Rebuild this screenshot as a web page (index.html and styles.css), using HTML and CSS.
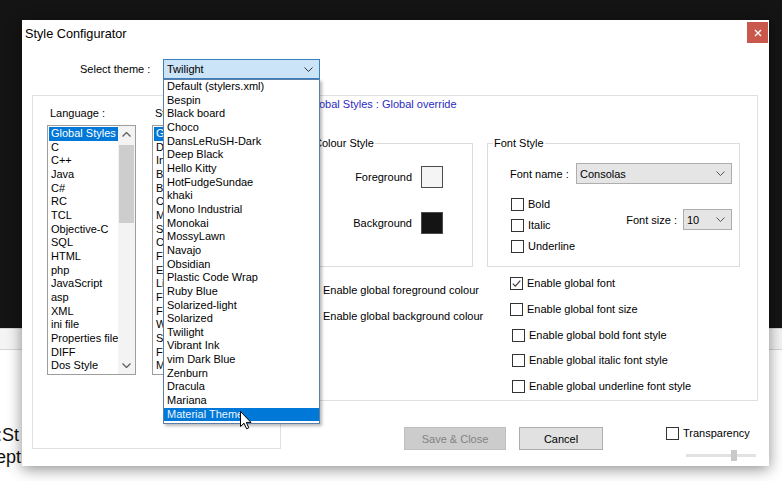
FILE: index.html
```html
<!DOCTYPE html>
<html lang="en">
<head>
<meta charset="utf-8">
<title>Style Configurator</title>
<link rel="stylesheet" href="styles.css">
</head>
<body>
<div class="desktop">
  <div class="bg-dark"></div>
  <div class="bg-bar"></div>
  <div class="bg-doc">
    <div class="doc-line">:St</div>
    <div class="doc-line doc-line-2">eption</div>
  </div>
</div>

<div class="dialog">
  <div class="titlebar">
    <span class="title">Style Configurator</span>
    <div class="close"><svg width="8" height="8" viewBox="0 0 8 8"><path d="M1 1L7 7M7 1L1 7" stroke="#fff" stroke-width="1.4"/></svg></div>
  </div>

  <div class="theme-row">
    <span class="theme-label">Select theme :</span>
    <div class="combo combo-theme"><span>Twilight</span><svg class="chev" width="9" height="5" viewBox="0 0 9 5"><path d="M0.5 0.5L4.5 4.5L8.5 0.5" fill="none" stroke="#333"/></svg></div>
  </div>

  <div class="main">
    <div class="panel-left">
      <div class="list-col">
        <div class="list-label">Language :</div>
        <div class="listbox lang-list">
          <div class="items">
            <div class="item sel">Global Styles</div>
            <div class="item">C</div>
            <div class="item">C++</div>
            <div class="item">Java</div>
            <div class="item">C#</div>
            <div class="item">RC</div>
            <div class="item">TCL</div>
            <div class="item">Objective-C</div>
            <div class="item">SQL</div>
            <div class="item">HTML</div>
            <div class="item">php</div>
            <div class="item">JavaScript</div>
            <div class="item">asp</div>
            <div class="item">XML</div>
            <div class="item">ini file</div>
            <div class="item">Properties file</div>
            <div class="item">DIFF</div>
            <div class="item">Dos Style</div>
          </div>
          <div class="vscroll">
            <div class="sb-btn"><svg width="9" height="5" viewBox="0 0 9 5"><path d="M0.5 4.5L4.5 0.5L8.5 4.5" fill="none" stroke="#606060" stroke-width="1.3"/></svg></div>
            <div class="sb-track"><div class="sb-thumb"></div></div>
            <div class="sb-btn"><svg width="9" height="5" viewBox="0 0 9 5"><path d="M0.5 0.5L4.5 4.5L8.5 0.5" fill="none" stroke="#606060" stroke-width="1.3"/></svg></div>
          </div>
        </div>
      </div>
      <div class="list-col style-col">
        <div class="list-label">Style :</div>
        <div class="listbox style-list">
          <div class="items">
            <div class="item sel">Global override</div>
            <div class="item">Default Style</div>
            <div class="item">Indent guideline style</div>
            <div class="item">Brace highlight style</div>
            <div class="item">Bad brace colour</div>
            <div class="item">Current line background colour</div>
            <div class="item">Mark colour</div>
            <div class="item">Selected text colour</div>
            <div class="item">Caret colour</div>
            <div class="item">Find Mark Style</div>
            <div class="item">Edge colour</div>
            <div class="item">Line number margin</div>
            <div class="item">Fold</div>
            <div class="item">Fold margin</div>
            <div class="item">White space symbol</div>
            <div class="item">Smart HighLighting</div>
            <div class="item">Find status</div>
            <div class="item">Mark Style 1</div>
          </div>
        </div>
      </div>
    </div>

    <div class="right-col">
      <div class="panel-right">
        <div class="header">Global Styles : Global override</div>
        <div class="groups">
          <div class="group group-colour">
            <span class="legend">Colour Style</span>
            <div class="colour-grid">
              <span class="clabel">Foreground</span><span class="swatch swatch-fg"></span>
              <span class="clabel">Background</span><span class="swatch swatch-bg"></span>
            </div>
          </div>
          <div class="group group-font">
            <span class="legend">Font Style</span>
            <div class="font-row">
              <span class="fn-label">Font name :</span>
              <div class="combo combo-font"><span>Consolas</span><svg class="chev" width="9" height="5" viewBox="0 0 9 5"><path d="M0.5 0.5L4.5 4.5L8.5 0.5" fill="none" stroke="#555"/></svg></div>
            </div>
            <div class="font-lower">
              <div class="style-checks">
                <div class="check"><span class="cb"></span>Bold</div>
                <div class="check"><span class="cb"></span>Italic</div>
                <div class="check"><span class="cb"></span>Underline</div>
              </div>
              <div class="size-row">
                <span class="fs-label">Font size :</span>
                <div class="combo combo-size"><span>10</span><svg class="chev" width="9" height="5" viewBox="0 0 9 5"><path d="M0.5 0.5L4.5 4.5L8.5 0.5" fill="none" stroke="#555"/></svg></div>
              </div>
            </div>
          </div>
        </div>
        <div class="enables">
          <div class="enables-left">
            <div class="check"><span class="cb"></span>Enable global foreground colour</div>
            <div class="check"><span class="cb"></span>Enable global background colour</div>
          </div>
          <div class="enables-right">
            <div class="check"><span class="cb"><svg width="11" height="11" viewBox="0 0 11 11"><path d="M1.8 5.6L4.3 8.1L9.3 2.6" fill="none" stroke="#333" stroke-width="1.1"/></svg></span>Enable global font</div>
            <div class="check"><span class="cb"></span>Enable global font size</div>
            <div class="check shift"><span class="cb"></span>Enable global bold font style</div>
            <div class="check shift"><span class="cb"></span>Enable global italic font style</div>
            <div class="check shift"><span class="cb"></span>Enable global underline font style</div>
          </div>
        </div>
      </div>

      <div class="footer">
        <button class="btn btn-save" disabled>Save &amp; Close</button>
        <button class="btn btn-cancel">Cancel</button>
        <div class="transp">
          <div class="check"><span class="cb"></span>Transparency</div>
          <div class="slider"><span class="thumb"></span></div>
        </div>
      </div>
    </div>
  </div>

  <div class="dropdown">
    <div class="ditem">Default (stylers.xml)</div>
    <div class="ditem">Bespin</div>
    <div class="ditem">Black board</div>
    <div class="ditem">Choco</div>
    <div class="ditem">DansLeRuSH-Dark</div>
    <div class="ditem">Deep Black</div>
    <div class="ditem">Hello Kitty</div>
    <div class="ditem">HotFudgeSundae</div>
    <div class="ditem">khaki</div>
    <div class="ditem">Mono Industrial</div>
    <div class="ditem">Monokai</div>
    <div class="ditem">MossyLawn</div>
    <div class="ditem">Navajo</div>
    <div class="ditem">Obsidian</div>
    <div class="ditem">Plastic Code Wrap</div>
    <div class="ditem">Ruby Blue</div>
    <div class="ditem">Solarized-light</div>
    <div class="ditem">Solarized</div>
    <div class="ditem">Twilight</div>
    <div class="ditem">Vibrant Ink</div>
    <div class="ditem">vim Dark Blue</div>
    <div class="ditem">Zenburn</div>
    <div class="ditem">Dracula</div>
    <div class="ditem">Mariana</div>
    <div class="ditem dsel">Material Theme</div>
  </div>
</div>

<svg class="cursor" width="13" height="19" viewBox="0 0 13 19"><path d="M0.5 0.5L0.5 15.5L4 12.2L6.6 17.8L8.8 16.8L6.3 11.4L11 11.4Z" fill="#fff" stroke="#000" stroke-width="1" stroke-linejoin="round"/></svg>
</body>
</html>
```

FILE: styles.css
```css
* { box-sizing: border-box; }
html, body { margin: 0; padding: 0; }
body {
  width: 782px;
  height: 481px;
  overflow: hidden;
  position: relative;
  background: #fff;
  font-family: "Liberation Sans", Arial, sans-serif;
  font-size: 11px;
  line-height: 14px;
  color: #000;
}

/* background desktop */
.desktop { display: flex; flex-direction: column; height: 481px; }
.bg-dark { flex: none; height: 328px; background: #141414; }
.bg-bar {
  flex: none;
  height: 22px;
  background: #f4f4f4;
  border-top: 1px solid #d6d6d6;
  border-bottom: 1px solid #d6d6d6;
}
.bg-doc {
  flex: 1;
  background: #fff;
  padding-top: 74px;
  font-size: 18px;
  line-height: 22px;
  color: #111;
}
.doc-line { white-space: nowrap; margin-left: -3px; }
.doc-line-2 { margin-left: -4px; }

/* dialog */
.dialog {
  position: absolute;
  left: 22px;
  top: 20px;
  width: 747px;
  height: 446px;
  background: #fff;
  box-shadow: 0 3px 14px rgba(0, 0, 0, 0.45);
  display: flex;
  flex-direction: column;
}
.titlebar { flex: none; height: 30px; display: flex; align-items: flex-start; }
.title { margin: 6px 0 0 3px; font-size: 12.7px; line-height: 16px; }
.close {
  margin: 2px 1px 0 auto;
  width: 21px;
  height: 21px;
  background: #c9574b;
  display: flex;
  align-items: center;
  justify-content: center;
}

.theme-row {
  flex: none;
  display: flex;
  align-items: center;
  height: 20px;
  margin-top: 9px;
  padding-left: 58px;
}
.theme-label { flex: none; width: 83px; }

.combo {
  display: flex;
  align-items: center;
  justify-content: space-between;
  border: 1px solid #adadad;
  background: #e5e5e5;
  padding: 0 6px 0 3px;
  flex: none;
}
.combo-theme { width: 157px; height: 20px; border-color: #3c7fc0; background: #cce4f7; }
.combo-font { width: 156px; height: 21px; }
.combo-size { width: 49px; height: 21px; }

.main { flex: 1; display: flex; align-items: flex-start; margin-top: 16px; }

/* left panel */
.panel-left {
  flex: none;
  margin-left: 10px;
  width: 249px;
  height: 354px;
  border: 1px solid #e0e0e0;
  display: flex;
  align-items: flex-start;
  padding: 10px 0 0 14px;
}
.list-col { display: flex; flex-direction: column; }
.style-col { margin-left: 16px; }
.list-label { padding-left: 3px; height: 14px; margin-bottom: 5px; white-space: nowrap; }
.listbox { display: flex; border: 1px solid #9d9d9d; background: #fff; height: 250px; }
.lang-list { width: 89px; }
.style-list { width: 112px; }
.items { flex: 1; min-width: 0; padding: 1px 0 0 1px; overflow: hidden; }
.item { height: 13.667px; line-height: 13.667px; padding-left: 2px; white-space: nowrap; }
.item.sel { background: #0078d7; color: #fff; }
.vscroll { flex: none; width: 17px; background: #f3f3f3; display: flex; flex-direction: column; }
.sb-btn { flex: none; height: 17px; display: flex; align-items: center; justify-content: center; }
.sb-track { flex: 1; padding: 2px 1px 0 1px; }
.sb-thumb { height: 78px; background: #cdcdcd; }

/* right panel */
.right-col { flex: none; margin-left: -1px; width: 478px; display: flex; flex-direction: column; }
.panel-right {
  height: 306px;
  border: 1px solid #e0e0e0;
  padding: 1px 0 0 25px;
}
.header { margin-left: 2px; height: 14px; color: #2b2bc4; white-space: nowrap; }
.groups { display: flex; margin-top: 32px; }
.group { position: relative; border: 1px solid #dcdcdc; height: 124px; flex: none; }
.group-colour { margin-left: 1px; width: 166px; }
.group-font { margin-left: 14px; width: 253px; padding: 19px 7px 0 22px; }
.legend {
  position: absolute;
  top: -8px;
  left: 5px;
  padding: 0 1px;
  background: #fff;
  line-height: 14px;
  white-space: nowrap;
}
.colour-grid {
  display: grid;
  grid-template-columns: 104px 22px;
  grid-auto-rows: 22px;
  column-gap: 9px;
  row-gap: 24px;
  align-items: center;
  padding-top: 22px;
}
.clabel { justify-self: end; }
.swatch { width: 22px; height: 22px; border: 1px solid #4a4a4a; }
.swatch-fg { background: #f4f4f4; }
.swatch-bg { background: #141414; }

.font-row { display: flex; align-items: center; height: 21px; }
.fn-label { flex: none; width: 66px; }
.font-lower { display: flex; align-items: flex-start; margin-top: 14px; }
.style-checks { margin-left: 1px; display: flex; flex-direction: column; gap: 8px; }
.size-row { margin-left: auto; margin-top: 11px; display: flex; align-items: center; }
.fs-label { margin-right: 6px; }

.check { display: flex; align-items: center; gap: 4px; height: 13px; line-height: 13px; white-space: nowrap; }
.cb {
  flex: none;
  width: 13px;
  height: 13px;
  border: 1px solid #333;
  background: #fff;
  display: flex;
  align-items: center;
  justify-content: center;
}

.enables { display: flex; margin-top: 10px; }
.enables-left { flex: none; width: 204px; padding-top: 7px; display: flex; flex-direction: column; gap: 13px; }
.enables-right { display: flex; flex-direction: column; gap: 12.75px; }
.enables-right .shift { margin-left: 2px; }

/* footer */
.footer { display: flex; align-items: flex-start; margin-top: 26px; padding-left: 124px; }
.btn {
  height: 23px;
  padding: 0;
  font: inherit;
  border: 1px solid #adadad;
  background: #e1e1e1;
  color: #000;
}
.btn-save { width: 102px; background: #cccccc; border-color: #bfbfbf; color: #838383; }
.btn-cancel { width: 84px; margin-left: 13px; }
.transp { margin-left: 63px; display: flex; flex-direction: column; }
.slider {
  margin: 10px 0 0 20px;
  width: 70px;
  height: 11px;
  background: linear-gradient(#e2e2e2, #e2e2e2) center / 100% 3px no-repeat;
  display: flex;
}
.thumb { margin-left: 45px; width: 6px; height: 11px; background: #c9c9c9; }

/* dropdown overlay */
.dropdown {
  position: absolute;
  left: 141px;
  top: 59px;
  width: 157px;
  height: 345px;
  background: #fff;
  border: 1px solid #5d7ea6;
  box-shadow: 2px 2px 3px rgba(0, 0, 0, 0.28);
}
.ditem { height: 13.667px; line-height: 13.667px; padding-left: 3px; white-space: nowrap; }
.ditem.dsel { background: #0078d7; color: #eef5ff; }

.cursor { position: absolute; left: 240px; top: 411px; }
```
